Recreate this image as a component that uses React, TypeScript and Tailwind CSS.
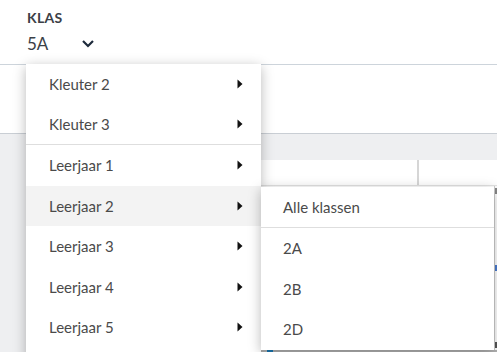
import React from "react";

const font = { fontFamily: "Lato, 'Open Sans', sans-serif" };

type Item = { label: string; divider?: boolean; active?: boolean };

const groups: Item[] = [
  { label: "Kleuter 2" },
  { label: "Kleuter 3", divider: true },
  { label: "Leerjaar 1" },
  { label: "Leerjaar 2", active: true },
  { label: "Leerjaar 3" },
  { label: "Leerjaar 4" },
  { label: "Leerjaar 5" },
];

const Caret = () => (
  <svg width="6" height="10" viewBox="0 0 6 10" className="shrink-0">
    <path d="M0.5 0.5 L5.5 5 L0.5 9.5 Z" fill="#111" />
  </svg>
);

const Chevron = () => (
  <svg width="14" height="9" viewBox="0 0 14 9">
    <path d="M2 2 L7 7 L12 2" fill="none" stroke="#1e2b3c" strokeWidth="2.2" />
  </svg>
);

const App = () => {
  return (
    <div
      className="relative w-[497px] h-[352px] overflow-hidden bg-white"
      style={font}
    >
      {/* header */}
      <div className="h-[65px] border-b border-[#cdd4db] pl-[27px] pt-[8px]">
        <div className="text-[14px] font-bold text-[#3b4047] leading-[19px] tracking-[0.3px]">
          KLAS
        </div>
        <div className="flex items-center gap-[33px] mt-[6px]">
          <span className="text-[17px] text-[#3b4047] leading-[21px]">5A</span>
          <Chevron />
        </div>
      </div>

      {/* toolbar */}
      <div className="h-[69px] border-b border-[#c9ced4]" />

      {/* content */}
      <div className="h-[218px] bg-[#eeeff1] flex flex-col">
        <div className="h-[26px]" />
        <div className="ml-[26px] flex-1 bg-white flex flex-col">
          <div className="h-[26px] flex border-b border-[#e4e4e4]">
            <div className="w-[393px] border-r-2 border-[#d6d6d6]" />
            <div className="flex-1" />
          </div>
          <div className="flex-1 flex justify-end">
            <div className="w-[3px] border-l border-[#cfcfcf] flex flex-col justify-between py-[2px]">
              <div className="h-[6px] w-[2px] bg-[#888]" />
              <div className="h-[6px] w-[2px] bg-[#4a7bd0]" />
              <div className="h-[6px] w-[2px] bg-[#555]" />
            </div>
          </div>
          <div className="h-[2px] flex">
            <div className="w-[241px] bg-[#c2c2c2]" />
            <div className="w-[6px] bg-[#1a7bb8]" />
            <div className="flex-1 bg-[#b5b5b5]" />
          </div>
        </div>
      </div>

      {/* class group menu */}
      <div className="absolute left-[26px] top-[64px] w-[235px] pb-[20px] bg-white shadow-[0_3px_12px_rgba(0,0,0,0.28)]">
        {groups.map((g) => (
          <div
            key={g.label}
            className={`h-[40.5px] flex items-center justify-between pl-[23px] pr-[18px] text-[15px] text-[#4a4a4a] ${
              g.active ? "bg-[#f3f3f3]" : ""
            } ${g.divider ? "border-b border-[#dedede]" : ""}`}
          >
            <span>{g.label}</span>
            <Caret />
          </div>
        ))}
      </div>

      {/* submenu */}
      <div className="absolute left-[261px] top-[187px] w-[233px] h-[163px] bg-white shadow-[0_3px_12px_rgba(0,0,0,0.28)]">
        <div className="h-[41px] flex items-center pl-[22px] text-[15px] text-[#4a4a4a] border-b border-[#dedede]">
          Alle klassen
        </div>
        {["2A", "2B", "2D"].map((c) => (
          <div
            key={c}
            className="h-[40.5px] flex items-center pl-[22px] text-[15px] text-[#4a4a4a]"
          >
            {c}
          </div>
        ))}
      </div>
    </div>
  );
};

export default App;
